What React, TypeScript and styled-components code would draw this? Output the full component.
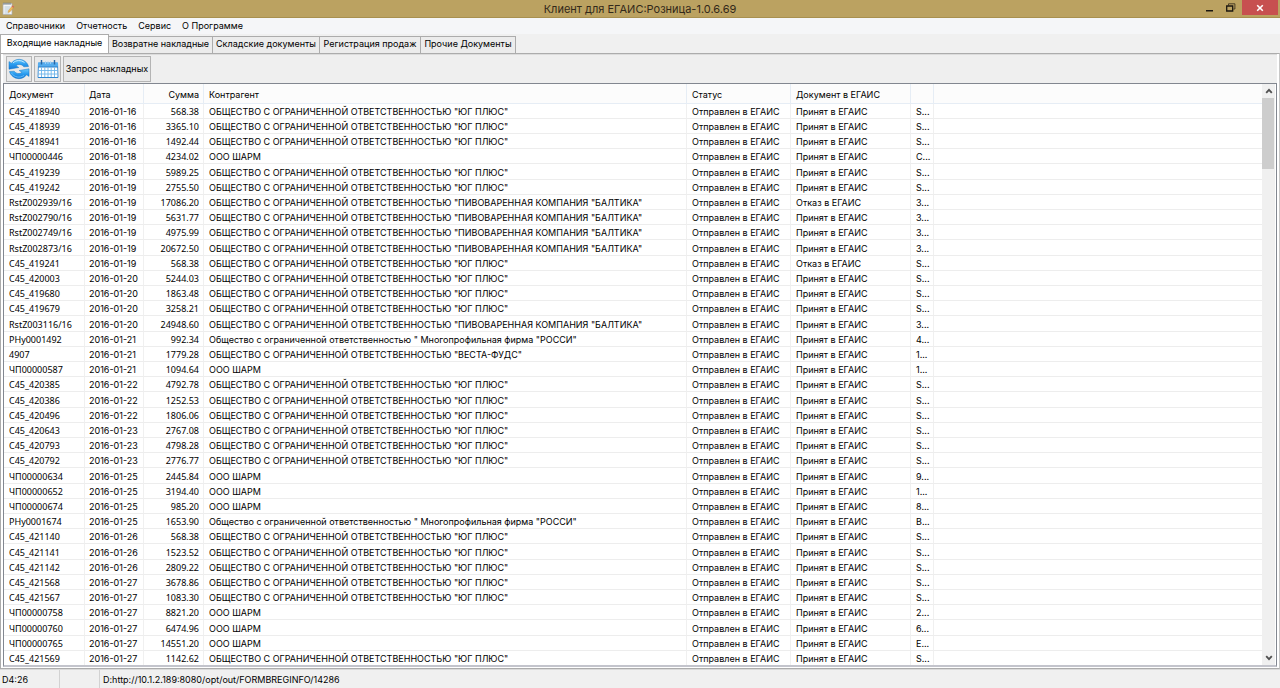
import React, { useState } from "react";
import styled, { createGlobalStyle } from "styled-components";

const sans = `Inter, "Noto Sans", sans-serif`;
const narrow = `"Noto Sans", "Open Sans", sans-serif`;

const GlobalStyle = createGlobalStyle`
  * { box-sizing: border-box; }
  body { margin: 0; background: #f0f0f0; color: #000; font: 9px/15px ${sans}; }
  button { font: inherit; color: inherit; padding: 0; border-radius: 0; cursor: default; }
`;

const Window = styled.div`
  display: flex;
  flex-direction: column;
  height: 100vh;
  overflow: hidden;
`;

const TitleBar = styled.header`
  display: grid;
  grid-template-columns: 1fr auto 1fr;
  align-items: center;
  flex: none;
  height: 18px;
  padding: 0 2px;
  background: #bba261;
  border-bottom: 1px solid #a8904f;
`;

const Title = styled.h1`
  margin: 0;
  padding-top: 1px;
  font-size: 11px;
  line-height: 16px;
  font-weight: 400;
  color: #33291a;
`;

const WindowControls = styled.div`
  display: flex;
  align-self: start;
  justify-content: flex-end;
`;

const WindowButton = styled.button<{ $close?: boolean }>`
  display: grid;
  place-items: center;
  width: ${p => (p.$close ? 36 : 21)}px;
  height: 15px;
  border: 0;
  background: ${p => (p.$close ? "#c75050" : "transparent")};
`;

const MenuBar = styled.nav`
  display: flex;
  flex: none;
  gap: 11px;
  height: 16px;
  padding: 0 6px;
  background: #f5f6f8;
`;

const MenuItem = styled.button`
  border: 0;
  background: transparent;
  line-height: 16px;
`;

const Tabs = styled.div`
  display: flex;
  flex: none;
  align-items: flex-end;
  height: 19px;
  background: #f0f0f0;
`;

const Tab = styled.button<{ $w: number; $active: boolean }>`
  width: ${p => p.$w}px;
  height: ${p => (p.$active ? 19 : 17)}px;
  border: 1px solid #acacac;
  border-left-width: ${p => (p.$active ? 1 : 0)}px;
  border-bottom-width: 0;
  background: ${p => (p.$active ? "#fff" : "#ececec")};
  line-height: 14px;
  white-space: nowrap;
  padding-bottom: 2px;
`;

const TabPage = styled.main`
  display: flex;
  flex-direction: column;
  flex: 1;
  min-height: 0;
  padding: 0 2px 1px;
  background: #fff;
  border: 1px solid #acacac;
  border-right-color: #c8c8c8;
`;

const Toolbar = styled.div`
  display: flex;
  flex: none;
  gap: 2px;
  height: 29px;
  padding: 1px 3px;
  background: #efefef;
  border-top: 1px solid #dcdcdc;
`;

const ToolButton = styled.button<{ $w: number }>`
  display: grid;
  place-items: center;
  width: ${p => p.$w}px;
  height: 26px;
  padding-bottom: 1px;
  border: 1px solid #b4b4b4;
  background: #e9e9e9;
  white-space: nowrap;
`;

const ListFrame = styled.section`
  display: flex;
  flex: 1;
  min-height: 0;
  padding-right: 1px;
  overflow: hidden;
  border: 1px solid #828790;
  border-bottom: 2px solid #c3c4cc;
`;

const ListView = styled.div`
  flex: 1;
  min-width: 0;
  overflow: hidden;
`;

const Table = styled.table`
  width: 100%;
  table-layout: fixed;
  border-collapse: separate;
  border-spacing: 0;
`;

const Col = styled.col<{ $w?: number }>`
  width: ${p => (p.$w ? `${p.$w}px` : "auto")};
`;

const HeadCell = styled.th<{ $right?: boolean; $tight?: boolean }>`
  height: 20px;
  padding: 1px 4px 0 ${p => (p.$tight ? 4 : 5)}px;
  background: #fcfcfc;
  border-right: 1px solid #e6edf5;
  border-bottom: 1px solid #e6edf5;
  font-weight: 400;
  text-align: ${p => (p.$right ? "right" : "left")};
  white-space: nowrap;
  &:last-child { border-right: 0; }
`;

const Row = styled.tr`
  height: 15px;
  &:nth-child(5n) { height: 16px; }
`;

const Cell = styled.td<{ $right?: boolean; $narrow?: boolean; $tight?: boolean }>`
  padding: 2px 4px 0 ${p => (p.$tight ? 4 : 5)}px;
  border-right: 1px solid #f0f0f0;
  border-bottom: 1px solid #ededed;
  font-family: ${p => (p.$narrow ? narrow : sans)};
  line-height: 12px;
  text-align: ${p => (p.$right ? "right" : "left")};
  white-space: nowrap;
  &:last-child { border-right: 0; }
`;

const ScrollBar = styled.div`
  display: flex;
  flex-direction: column;
  flex: none;
  width: 13px;
  background: #f0f0f0;
`;

const ScrollArrow = styled.button`
  display: grid;
  place-items: center;
  height: 14px;
  border: 0;
  background: transparent;
`;

const ScrollTrack = styled.div`
  flex: 1;
  padding: 0 1px 0 0;
`;

const ScrollThumb = styled.div`
  height: 71px;
  background: #cdcdcd;
`;

const StatusBar = styled.footer`
  display: flex;
  flex: none;
  height: 19px;
  background: #f0f0f0;
  border-top: 1px solid #dadada;
`;

const StatusPart = styled.span<{ $w?: number }>`
  flex: ${p => (p.$w ? "none" : "1")};
  width: ${p => (p.$w ? `${p.$w}px` : "auto")};
  padding: 2px 0 0 ${p => (p.$w ? 2 : 3)}px;
  border-right: ${p => (p.$w ? "1px solid #d2d2d2" : "0")};
  line-height: 16px;
`;

const AppIcon = () => (
  <svg width="13" height="14" viewBox="0 0 13 14" aria-hidden="true">
    <path d="M1 1.500h9v11H1z" fill="#f4f5f6" stroke="#a9adb2" strokeWidth=".7" />
    <path d="M2 .5v2.500M4 .5v2.500M6 .5v2.500M8 .5v2.500" stroke="#6d7c86" strokeWidth=".9" />
    <path d="M2.500 5h6M2.500 7h6M2.500 9h5M2.500 11h5" stroke="#a8c0d6" strokeWidth=".8" />
    <path d="M6 10.500l.6-2 3.200-4 1.600 1.200-3.300 4z" fill="#f0b856" stroke="#c58a34" strokeWidth=".4" />
    <path d="M9.800 4.500l.8-1 1.600 1.200-.8 1z" fill="#d8625a" />
  </svg>
);

const RefreshIcon = () => (
  <svg width="22" height="22" viewBox="0 0 22 22" aria-hidden="true">
    <defs>
      <linearGradient id="refreshBlue" x1="0" y1="0" x2="0" y2="1">
        <stop offset="0" stopColor="#6cc8fb" />
        <stop offset=".5" stopColor="#2a9df0" />
        <stop offset="1" stopColor="#1579d6" />
      </linearGradient>
    </defs>
    <g fill="url(#refreshBlue)" stroke="#1676c4" strokeWidth=".5" strokeLinejoin="round">
      <path d="M1 11.200V3.600l2.400 1.700C6.500.8 13 0 17.300 3.600c1.600 1.300 2.700 3 3.200 4.900l-4.700.3C14 6.200 10.300 5.700 8 7.700l2.800 1.800z" />
      <path d="M21 10.800v7.600l-2.400-1.700c-3.100 4.500-9.600 5.300-13.900 1.700-1.600-1.300-2.700-3-3.200-4.900l4.700-.3c1.800 2.600 5.500 3.100 7.800 1.100l-2.800-1.800z" />
    </g>
    <path d="M5 5C8 1.900 13 1.800 16.500 4.600" fill="none" stroke="#c4ebff" strokeWidth="1" />
    <path d="M3.500 15c2.500 4.400 8.500 5.400 12.500 2.400" fill="none" stroke="#6cc0f8" strokeWidth=".9" />
  </svg>
);

const CalendarIcon = () => (
  <svg width="22" height="20" viewBox="0 0 22 20" aria-hidden="true">
    <path d="M1.500 4h19l.5 14.500H1z" fill="#fff" stroke="#4a96d8" />
    <path d="M1 3.500h20v4.500H1z" fill="#54acee" />
    <path d="M1 8h20" stroke="#2d7fc6" />
    <path d="M4.500 1v4.500M17.500 1v4.500" stroke="#2464a4" strokeWidth="1.400" />
    <path d="M8.500 2v3M11 2v3M13.500 2v3" stroke="#a9d6f8" strokeWidth=".8" />
    <path d="M4.500 8.500v10M7.800 8.500v10M11 8.500v10M14.200 8.500v10M17.500 8.500v10M1.500 11.500h19M1.500 15h19" stroke="#6db4ea" strokeWidth=".9" />
    <path d="M1 18.500h20" stroke="#2f86cf" />
  </svg>
);

const MinimizeIcon = () => (
  <svg width="9" height="10" viewBox="0 0 9 10" aria-hidden="true">
    <path d="M0 7h7v1.500H0z" fill="#1c1710" />
  </svg>
);

const RestoreIcon = () => (
  <svg width="11" height="9" viewBox="0 0 11 9" aria-hidden="true">
    <path d="M2.500 2.500V.8h6.400v5.200H7.500" fill="none" stroke="#4a3f25" />
    <path d="M.7 3h6v5h-6z" fill="none" stroke="#1c1710" strokeWidth="1.300" />
  </svg>
);

const CloseIcon = () => (
  <svg width="8" height="8" viewBox="0 0 8 8" aria-hidden="true">
    <path d="M1.200 1.200l5.600 5.600M6.800 1.200L1.200 6.800" stroke="#fff" strokeWidth="1.600" />
  </svg>
);

const Chevron = ({ down }: { down?: boolean }) => (
  <svg width="8" height="6" viewBox="0 0 8 6" aria-hidden="true">
    <path d={down ? "M1.200 1.200L4 4.200l2.800-3" : "M1.200 4.800L4 1.800l2.800 3"} fill="none" stroke="#505050" strokeWidth="1.800" />
  </svg>
);

const plus = 'ОБЩЕСТВО С ОГРАНИЧЕННОЙ ОТВЕТСТВЕННОСТЬЮ "ЮГ ПЛЮС"';
const baltika = 'ОБЩЕСТВО С ОГРАНИЧЕННОЙ ОТВЕТСТВЕННОСТЬЮ "ПИВОВАРЕННАЯ КОМПАНИЯ "БАЛТИКА"';
const vesta = 'ОБЩЕСТВО С ОГРАНИЧЕННОЙ ОТВЕТСТВЕННОСТЬЮ "ВЕСТА-ФУДС"';
const rossi = 'Общество с ограниченной ответственностью " Многопрофильная фирма "РОССИ"';
const sharm = "ООО ШАРМ";

type Invoice = [doc: string, day: number, sum: string, partner: string, mark: string, refused?: boolean];

const invoices: Invoice[] = [
  ["C45_418940", 16, "568.38", plus, "S"],
  ["C45_418939", 16, "3365.10", plus, "S"],
  ["C45_418941", 16, "1492.44", plus, "S"],
  ["ЧП00000446", 18, "4234.02", sharm, "C"],
  ["C45_419239", 19, "5989.25", plus, "S"],
  ["C45_419242", 19, "2755.50", plus, "S"],
  ["RstZ002939/16", 19, "17086.20", baltika, "3", true],
  ["RstZ002790/16", 19, "5631.77", baltika, "3"],
  ["RstZ002749/16", 19, "4975.99", baltika, "3"],
  ["RstZ002873/16", 19, "20672.50", baltika, "3"],
  ["C45_419241", 19, "568.38", plus, "S", true],
  ["C45_420003", 20, "5244.03", plus, "S"],
  ["C45_419680", 20, "1863.48", plus, "S"],
  ["C45_419679", 20, "3258.21", plus, "S"],
  ["RstZ003116/16", 20, "24948.60", baltika, "3"],
  ["РНу0001492", 21, "992.34", rossi, "4"],
  ["4907", 21, "1779.28", vesta, "1"],
  ["ЧП00000587", 21, "1094.64", sharm, "1"],
  ["C45_420385", 22, "4792.78", plus, "S"],
  ["C45_420386", 22, "1252.53", plus, "S"],
  ["C45_420496", 22, "1806.06", plus, "S"],
  ["C45_420643", 23, "2767.08", plus, "S"],
  ["C45_420793", 23, "4798.28", plus, "S"],
  ["C45_420792", 23, "2776.77", plus, "S"],
  ["ЧП00000634", 25, "2445.84", sharm, "9"],
  ["ЧП00000652", 25, "3194.40", sharm, "1"],
  ["ЧП00000674", 25, "985.20", sharm, "8"],
  ["РНу0001674", 25, "1653.90", rossi, "B"],
  ["C45_421140", 26, "568.38", plus, "S"],
  ["C45_421141", 26, "1523.52", plus, "S"],
  ["C45_421142", 26, "2809.22", plus, "S"],
  ["C45_421568", 27, "3678.86", plus, "S"],
  ["C45_421567", 27, "1083.30", plus, "S"],
  ["ЧП00000758", 27, "8821.20", sharm, "2"],
  ["ЧП00000760", 27, "6474.96", sharm, "6"],
  ["ЧП00000765", 27, "14551.20", sharm, "E"],
  ["C45_421569", 27, "1142.62", plus, "S"],
];

const menus = ["Справочники", "Отчетность", "Сервис", "О Программе"];

const tabs: [string, number][] = [
  ["Входящие накладные", 109],
  ["Возвратне накладные", 104],
  ["Складские документы", 107],
  ["Регистрация продаж", 101],
  ["Прочие Документы", 95],
];

const App = () => {
  const [active, setActive] = useState(0);
  return (
    <Window>
      <GlobalStyle />
      <TitleBar>
        <AppIcon />
        <Title>Клиент для ЕГАИС:Розница-1.0.6.69</Title>
        <WindowControls>
          <WindowButton aria-label="Свернуть"><MinimizeIcon /></WindowButton>
          <WindowButton aria-label="Восстановить"><RestoreIcon /></WindowButton>
          <WindowButton $close aria-label="Закрыть"><CloseIcon /></WindowButton>
        </WindowControls>
      </TitleBar>
      <MenuBar>
        {menus.map(m => <MenuItem key={m}>{m}</MenuItem>)}
      </MenuBar>
      <Tabs role="tablist">
        {tabs.map(([name, w], i) => (
          <Tab key={name} role="tab" aria-selected={i === active} $w={w} $active={i === active} onClick={() => setActive(i)}>
            {name}
          </Tab>
        ))}
      </Tabs>
      <TabPage>
        <Toolbar>
          <ToolButton $w={26} aria-label="Обновить"><RefreshIcon /></ToolButton>
          <ToolButton $w={27} aria-label="Календарь"><CalendarIcon /></ToolButton>
          <ToolButton $w={88}>Запрос накладных</ToolButton>
        </Toolbar>
        <ListFrame>
          <ListView>
            <Table>
              <colgroup>
                <Col $w={81} /><Col $w={59} /><Col $w={60} /><Col $w={483} /><Col $w={104} /><Col $w={120} /><Col $w={23} /><Col />
              </colgroup>
              <thead>
                <tr>
                  <HeadCell>Документ</HeadCell>
                  <HeadCell $tight>Дата</HeadCell>
                  <HeadCell $right>Сумма</HeadCell>
                  <HeadCell>Контрагент</HeadCell>
                  <HeadCell>Статус</HeadCell>
                  <HeadCell>Документ в ЕГАИС</HeadCell>
                  <HeadCell />
                  <HeadCell />
                </tr>
              </thead>
              <tbody>
                {invoices.map(([doc, day, sum, partner, mark, refused]) => (
                  <Row key={doc}>
                    <Cell $narrow>{doc}</Cell>
                    <Cell $tight>{`2016-01-${day}`}</Cell>
                    <Cell $right $narrow>{sum}</Cell>
                    <Cell>{partner}</Cell>
                    <Cell>Отправлен в ЕГАИС</Cell>
                    <Cell>{refused ? "Отказ в ЕГАИС" : "Принят в ЕГАИС"}</Cell>
                    <Cell>{mark}...</Cell>
                    <Cell />
                  </Row>
                ))}
              </tbody>
            </Table>
          </ListView>
          <ScrollBar>
            <ScrollArrow aria-label="Вверх"><Chevron /></ScrollArrow>
            <ScrollTrack><ScrollThumb /></ScrollTrack>
            <ScrollArrow aria-label="Вниз"><Chevron down /></ScrollArrow>
          </ScrollBar>
        </ListFrame>
      </TabPage>
      <StatusBar>
        <StatusPart $w={60}>D4:26</StatusPart>
        <StatusPart $w={40} />
        <StatusPart>D:http://10.1.2.189:8080/opt/out/FORMBREGINFO/14286</StatusPart>
      </StatusBar>
    </Window>
  );
};

export default App;
